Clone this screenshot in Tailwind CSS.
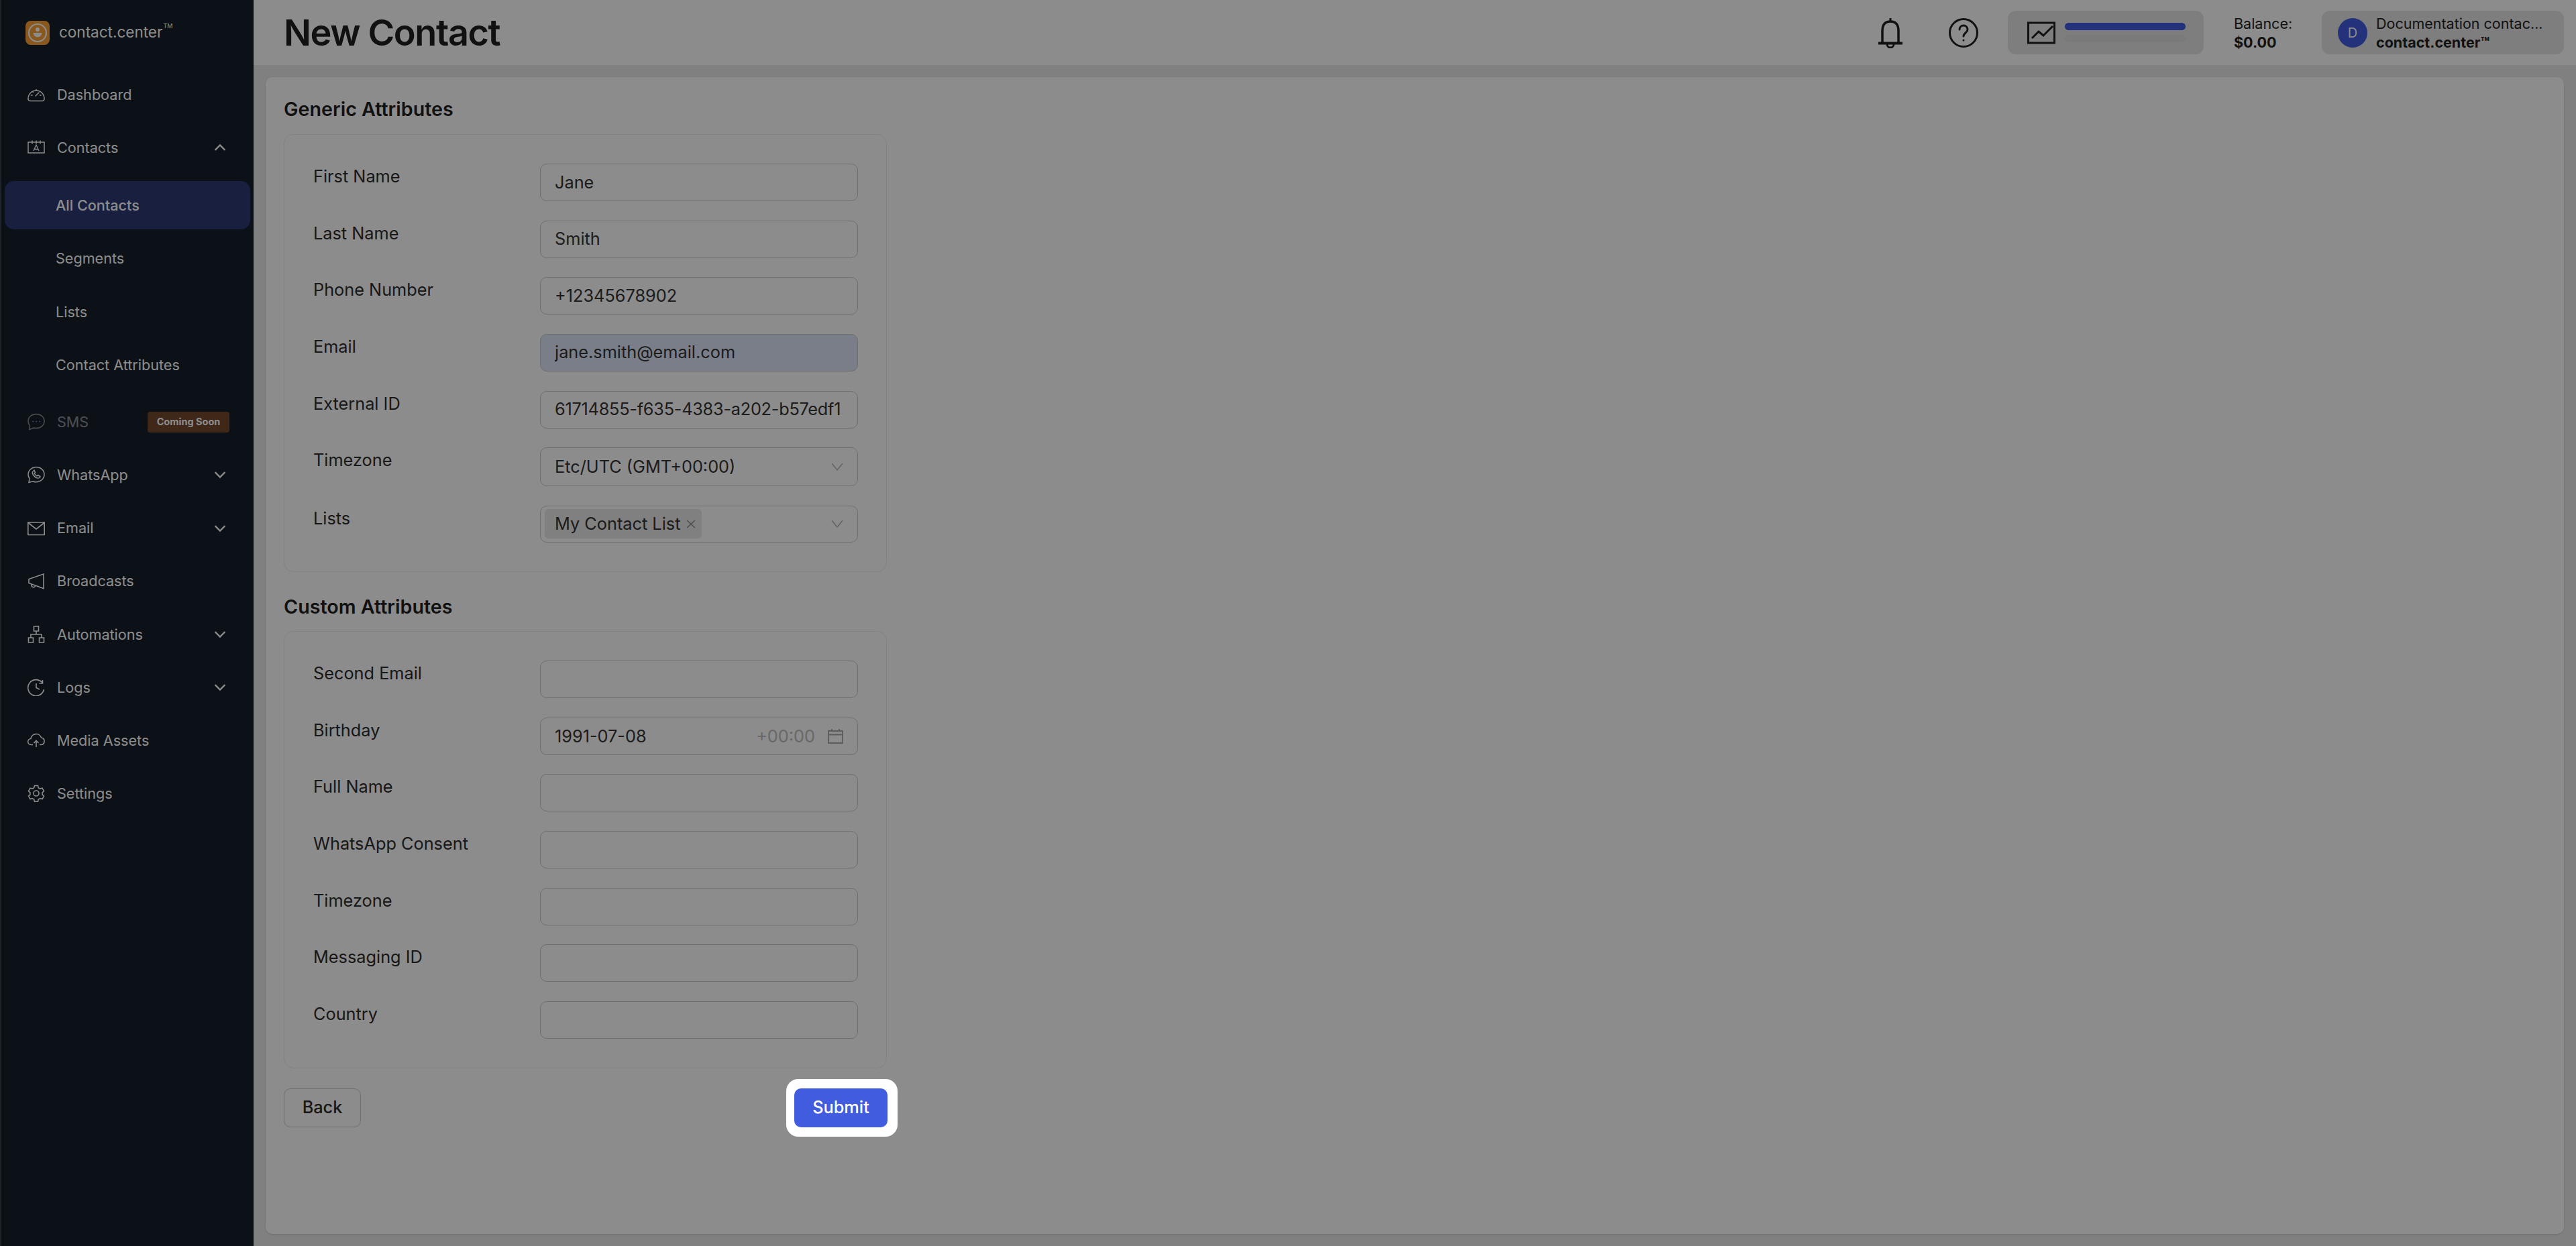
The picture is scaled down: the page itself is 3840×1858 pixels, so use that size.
<!DOCTYPE html>
<html lang="en">
<head>
<meta charset="utf-8">
<title>New Contact</title>
<script src="https://cdn.jsdelivr.net/npm/@tailwindcss/browser@4"></script>
</head>
<body class="h-[1858px] w-[3840px] overflow-hidden bg-[#e9e9e9] font-[Inter,sans-serif]">
<div class="flex h-full">
  <aside class="flex h-full w-[378px] shrink-0 flex-col border-l-2 border-[#3a3f47] bg-[#171f2b] text-[21.6px] text-white">
    <div class="flex h-[105px] shrink-0 items-start pl-[36px] pt-[31px]">
      <svg class="h-[36px] w-[36px] shrink-0" viewBox="0 0 36 36"><rect width="36" height="36" rx="8" fill="#fb9f33"/><circle cx="18" cy="18" r="13" fill="none" stroke="#fff" stroke-width="2.2"/><circle cx="18" cy="13" r="3" fill="#fff"/><path d="M11.5 18h13a6.5 6.5 0 0 1-13 0z" fill="#fff"/></svg>
      <span class="ml-[14px] mt-[2px] text-[22.5px] leading-[30px]">contact.center</span>
      <span class="ml-[1px] mt-[3px] text-[9px] leading-[10px]">TM</span>
    </div>
    <nav class="flex flex-col gap-[7.2px]">
      <a class="flex h-[72px] items-center pl-[39px]"><svg class="h-[26px] w-[26px] shrink-0" viewBox="0 0 26 26" fill="none" stroke="currentColor" stroke-width="1.5"><path d="M4 22.5h18a3 3 0 0 0 3-3.5 12 12 0 1 0-24 0 3 3 0 0 0 3 3.5z"/><path d="M12 15l5-5M13 5.500v1.500M5.500 14H7M20 14h-1.500M7.500 8.500l1 1" stroke-linecap="round"/></svg><span class="ml-[18px]">Dashboard</span></a>
      <a class="flex h-[72px] items-center pl-[39px] pr-[41px]"><svg class="h-[26px] w-[26px] shrink-0" viewBox="0 0 26 26" fill="none" stroke="currentColor" stroke-width="1.5"><path d="M1 5h24v16H1zM7 2.500v5M13 2.500v5M19 2.500v5"/><path d="M9 18l4-9 4 9M10.200 15.500h5.600" stroke-width="1.300"/></svg><span class="ml-[18px] flex-1">Contacts</span><svg class="h-[12px] w-[18px]" viewBox="0 0 18 12" fill="none" stroke="currentColor" stroke-width="2.400"><path d="M1.500 10L9 2.500 16.500 10"/></svg></a>
      <a class="ml-[5px] mr-[5px] mt-[7px] flex h-[72px] items-center rounded-[14px] bg-[#2c3a74] pl-[76px] font-medium">All Contacts</a>
      <a class="flex h-[72px] items-center pl-[81px]">Segments</a>
      <a class="flex h-[72px] items-center pl-[81px]">Lists</a>
      <a class="flex h-[72px] items-center pl-[81px]">Contact Attributes</a>
      <a class="mt-[6px] flex h-[72px] items-center pl-[39px] pr-[36px]"><span class="flex flex-1 items-center opacity-50"><svg class="h-[26px] w-[26px] shrink-0" viewBox="0 0 26 26" fill="none" stroke="currentColor" stroke-width="1.5"><path d="M13 1.500C6 1.500 1 6 1 12c0 3 1 5 2.500 6.500L3 24.500l6-2.500c1.300.4 2.600.5 4 .5 7 0 12-4.500 12-10.500S20 1.500 13 1.500z"/><path d="M8 12.500h.5M13 12.500h.5M18 12.500h.5" stroke-linecap="round"/></svg><span class="ml-[18px]">SMS</span></span><span class="flex h-[31px] w-[122px] items-center justify-center rounded-[4px] bg-[#74492c] text-[14.500px] font-bold">Coming Soon</span></a>
      <a class="flex h-[72px] items-center pl-[39px] pr-[41px]"><svg class="h-[26px] w-[26px] shrink-0" viewBox="0 0 26 26" fill="none" stroke="currentColor" stroke-width="1.5"><path d="M13 1.500C6.500 1.500 1 6.500 1 12.500c0 2.300.8 4.400 2 6l-1 6 6-1.800c1.500.7 3.200 1.100 5 1.100 6.500 0 12-5 12-11.300S19.500 1.500 13 1.500z"/><path d="M8.500 7.500c-1.500 1-1.500 3 0 5.500 2 3 5 5 7.500 5 1.500 0 3-1.200 3-2.500l-3.500-2-1.500 1.300c-1.700-.8-3-2.300-3.800-4l1.300-1.300-1.500-3.200z"/></svg><span class="ml-[18px] flex-1">WhatsApp</span><svg class="h-[12px] w-[18px]" viewBox="0 0 18 12" fill="none" stroke="currentColor" stroke-width="2.400"><path d="M1.500 2L9 9.500 16.500 2"/></svg></a>
      <a class="flex h-[72px] items-center pl-[39px] pr-[41px]"><svg class="h-[26px] w-[26px] shrink-0" viewBox="0 0 26 26" fill="none" stroke="currentColor" stroke-width="1.6"><path d="M.8 4h24.400v18.500H.8zM1 4.500l12 9.500 12-9.500"/></svg><span class="ml-[18px] flex-1">Email</span><svg class="h-[12px] w-[18px]" viewBox="0 0 18 12" fill="none" stroke="currentColor" stroke-width="2.400"><path d="M1.500 2L9 9.500 16.500 2"/></svg></a>
      <a class="flex h-[72px] items-center pl-[39px]"><svg class="h-[26px] w-[26px] shrink-0" viewBox="0 0 26 26" fill="none" stroke="currentColor" stroke-width="1.6"><path d="M24 2L2 9.500v6L24 23.500zM6 17v2.500a2.500 2.500 0 0 0 2.500 2 2.500 2.500 0 0 0 3-1.500"/></svg><span class="ml-[18px]">Broadcasts</span></a>
      <a class="flex h-[72px] items-center pl-[39px] pr-[41px]"><svg class="h-[26px] w-[26px] shrink-0" viewBox="0 0 26 26" fill="none" stroke="currentColor" stroke-width="1.6"><path d="M9.500 1h7v7h-7zM1.500 18h7v7h-7zM17.500 18h7v7h-7zM13 8v5M5 18v-5h16v5"/></svg><span class="ml-[18px] flex-1">Automations</span><svg class="h-[12px] w-[18px]" viewBox="0 0 18 12" fill="none" stroke="currentColor" stroke-width="2.400"><path d="M1.500 2L9 9.500 16.500 2"/></svg></a>
      <a class="flex h-[72px] items-center pl-[39px] pr-[41px]"><svg class="h-[26px] w-[26px] shrink-0" viewBox="0 0 26 26" fill="none" stroke="currentColor" stroke-width="1.6"><path d="M22 6A12 12 0 1 0 24.500 16M22.500 2v5h-5M13 7v6.500l5 2.500"/></svg><span class="ml-[18px] flex-1">Logs</span><svg class="h-[12px] w-[18px]" viewBox="0 0 18 12" fill="none" stroke="currentColor" stroke-width="2.400"><path d="M1.500 2L9 9.500 16.500 2"/></svg></a>
      <a class="flex h-[72px] items-center pl-[39px]"><svg class="h-[26px] w-[26px] shrink-0" viewBox="0 0 26 26" fill="none" stroke="currentColor" stroke-width="1.600"><path d="M8 19.500H5.500a4.500 4.500 0 0 1-.5-9A8 8 0 0 1 20.500 9a5.300 5.300 0 0 1 0 10.500H18M13 23v-9M9.500 17l3.500-3.500 3.500 3.500"/></svg><span class="ml-[18px]">Media Assets</span></a>
      <a class="flex h-[72px] items-center pl-[39px]"><svg class="h-[26px] w-[26px] shrink-0" viewBox="0 0 26 26" fill="none" stroke="currentColor" stroke-width="1.600"><circle cx="13" cy="13" r="4"/><path d="M10.500 1.500h5l.8 3.200 2.500 1.400 3.200-.9 2.500 4.400-2.400 2.300v2.900l2.400 2.300-2.500 4.400-3.200-.9-2.500 1.400-.8 3.200h-5l-.8-3.200-2.500-1.400-3.200.9-2.500-4.400 2.400-2.300v-2.900L1.500 9.600 4 5.200l3.200.9 2.500-1.400z"/></svg><span class="ml-[18px]">Settings</span></a>
    </nav>
  </aside>

  <div class="flex min-w-0 flex-1 flex-col">
    <header class="flex h-[97px] shrink-0 items-center bg-white pl-[45px] pr-[18px] text-[#1f1f1f]">
      <h1 class="flex-1 text-[54px] font-semibold leading-[94px] tracking-[-1.4px] text-[#1f1f1f]">New Contact</h1>
      <svg class="h-[46px] w-[36px]" viewBox="0 0 36 46" fill="none" stroke="currentColor" stroke-width="3.500"><path d="M6 38V20C6 11 10 6 18 6s12 5 12 14v18"/><path d="M0 38.500h36" stroke-width="4"/><path d="M18 1v5M13 40a5 5 0 0 0 10 0" stroke-width="3"/></svg>
      <svg class="ml-[69px] h-[44px] w-[44px]" viewBox="0 0 44 44" fill="none" stroke="currentColor" stroke-width="3"><circle cx="22" cy="22" r="20.500"/><path d="M16 17c0-4 3-6 6-6s6 2 6 6c0 5-6 5-6 10" stroke-linecap="round"/><circle cx="22" cy="33" r="1.500" fill="currentColor" stroke="none"/></svg>
      <div class="ml-[44px] flex h-[65px] w-[292px] items-center rounded-[12px] bg-[#e6e6e6] pl-[29px] pr-[27px]">
        <svg class="h-[34px] w-[42px] shrink-0" viewBox="0 0 42 34" fill="none" stroke="currentColor" stroke-width="3"><path d="M1.500 2h39v30h-39z"/><path d="M7 25l10-10 7 6 14-14"/></svg>
        <div class="ml-[14px] flex flex-1 flex-col gap-[7px]"><div class="h-[11px] rounded-full bg-[#415cde]"></div><div class="h-[11px] rounded-full bg-[#dedede]"></div></div>
      </div>
      <div class="ml-[45px] w-[131px] text-[21.5px] leading-[28px]"><div>Balance:</div><div class="font-bold">$0.00</div></div>
      <div class="flex h-[65px] w-[361px] items-center rounded-[12px] bg-[#e6e6e6] pl-[24px]">
        <div class="flex h-[44px] w-[44px] shrink-0 items-center justify-center rounded-full bg-[#415cde] text-[20px] text-white">D</div>
        <div class="ml-[13px] whitespace-nowrap text-[21.5px] leading-[28px]"><div>Documentation contac...</div><div class="font-bold">contact.center™</div></div>
      </div>
    </header>
    <main class="ml-[18px] mr-[18px] mt-[18px] h-[1725px] rounded-[10px] bg-white pl-[27px] pt-[28px] shadow-sm">
      <form class="w-[900px] text-[#2d2d2d]">
        <h2 class="mb-[17px] h-[40px] text-[28.7px] font-semibold leading-[40px] text-[#1f1f1f]">Generic Attributes</h2>
        <fieldset class="flex w-[899px] flex-col gap-[28.67px] rounded-[14px] border-[1.5px] border-[#ededed] pb-[43px] pl-[43px] pr-[42px] pt-[43px] text-[25.3px]">
          <div class="flex"><label class="w-[338px] pt-[2px] leading-[34px]">First Name</label><input class="h-[56px] flex-1 rounded-[10px] border-[1.5px] border-[#cacaca] bg-white px-[21px] pb-[2px] text-[#333]" value="Jane"></div>
          <div class="flex"><label class="w-[338px] pt-[2px] leading-[34px]">Last Name</label><input class="h-[56px] flex-1 rounded-[10px] border-[1.5px] border-[#cacaca] bg-white px-[21px] pb-[2px] text-[#333]" value="Smith"></div>
          <div class="flex"><label class="w-[338px] pt-[2px] leading-[34px]">Phone Number</label><input class="h-[56px] flex-1 rounded-[10px] border-[1.5px] border-[#cacaca] bg-white px-[21px] pb-[2px] text-[#333]" value="+12345678902"></div>
          <div class="flex"><label class="w-[338px] pt-[2px] leading-[34px]">Email</label><input class="h-[56px] flex-1 rounded-[10px] border-[1.5px] border-[#cacaca] bg-[#dfe6f7] px-[21px] pb-[2px] text-[#333]" value="jane.smith@email.com"></div>
          <div class="flex"><label class="w-[338px] pt-[2px] leading-[34px]">External ID</label><input class="h-[56px] flex-1 rounded-[10px] border-[1.5px] border-[#cacaca] bg-white px-[21px] pb-[2px] tracking-[-0.25px] text-[#333]" value="61714855-f635-4383-a202-b57edf1"></div>
          <div class="flex"><label class="w-[338px] pt-[2px] leading-[34px]">Timezone</label><div class="flex h-[58px] flex-1 items-center justify-between rounded-[10px] border-[1.5px] border-[#cacaca] pl-[21px] pr-[21px] text-[#333]"><span>Etc/UTC (GMT+00:00)</span><svg class="h-[12px] w-[18px]" viewBox="0 0 18 12" fill="none" stroke="#b5b5b5" stroke-width="1.500"><path d="M1 1l8 10 8-10"/></svg></div></div>
          <div class="flex"><label class="w-[338px] pt-[2px] leading-[34px]">Lists</label><div class="flex h-[55px] flex-1 items-center justify-between rounded-[10px] border-[1.5px] border-[#cacaca] pl-[6px] pr-[21px] text-[#333]"><span class="flex h-[44px] w-[234px] items-center justify-between rounded-[6px] bg-[#e9e9e9] pl-[15px] pr-[9px]">My Contact List<svg class="h-[13px] w-[14px]" viewBox="0 0 14 13" fill="none" stroke="#8a8a8a" stroke-width="1.500"><path d="M1 1l12 11M13 1L1 12"/></svg></span><svg class="h-[12px] w-[18px]" viewBox="0 0 18 12" fill="none" stroke="#b5b5b5" stroke-width="1.500"><path d="M1 1l8 10 8-10"/></svg></div></div>
        </fieldset>
        <h2 class="mb-[16px] mt-[32px] h-[40px] text-[28.7px] font-semibold leading-[40px] text-[#1f1f1f]">Custom Attributes</h2>
        <fieldset class="flex w-[899px] flex-col gap-[28.67px] rounded-[14px] border-[1.5px] border-[#ededed] pb-[43px] pl-[43px] pr-[42px] pt-[43px] text-[25.3px]">
          <div class="flex"><label class="w-[338px] pt-[2px] leading-[34px]">Second Email</label><input class="h-[56px] flex-1 rounded-[10px] border-[1.5px] border-[#cacaca] bg-white px-[21px]"></div>
          <div class="flex"><label class="w-[338px] pt-[2px] leading-[34px]">Birthday</label><div class="flex h-[56px] flex-1 items-center rounded-[10px] border-[1.5px] border-[#cacaca] pl-[21px] pr-[21px] text-[#333]"><span class="flex-1">1991-07-08</span><span class="text-[#bdbdbd]">+00:00</span><svg class="ml-[19px] h-[22px] w-[23px]" viewBox="0 0 23 22" fill="none" stroke="#a8a8a8" stroke-width="1.800"><path d="M1 3h21v18H1zM1 8.500h21M6 0v4M17 0v4"/></svg></div></div>
          <div class="flex"><label class="w-[338px] pt-[2px] leading-[34px]">Full Name</label><input class="h-[56px] flex-1 rounded-[10px] border-[1.5px] border-[#cacaca] bg-white px-[21px]"></div>
          <div class="flex"><label class="w-[338px] pt-[2px] leading-[34px]">WhatsApp Consent</label><input class="h-[56px] flex-1 rounded-[10px] border-[1.5px] border-[#cacaca] bg-white px-[21px]"></div>
          <div class="flex"><label class="w-[338px] pt-[2px] leading-[34px]">Timezone</label><input class="h-[56px] flex-1 rounded-[10px] border-[1.5px] border-[#cacaca] bg-white px-[21px]"></div>
          <div class="flex"><label class="w-[338px] pt-[2px] leading-[34px]">Messaging ID</label><input class="h-[56px] flex-1 rounded-[10px] border-[1.5px] border-[#cacaca] bg-white px-[21px]"></div>
          <div class="flex"><label class="w-[338px] pt-[2px] leading-[34px]">Country</label><input class="h-[56px] flex-1 rounded-[10px] border-[1.5px] border-[#cacaca] bg-white px-[21px]"></div>
        </fieldset>
        <div class="mt-[30px] flex items-center justify-between text-[25.3px]">
          <button type="button" class="h-[58px] w-[115px] rounded-[10px] border-[1.5px] border-[#cacaca] pb-[2px] font-medium text-[#2d2d2d]">Back</button>
          <div class="relative">
            <button type="button" class="h-[58px] w-[139px] rounded-[10px] bg-[#415cde] pb-[2px] font-medium text-white">Submit</button>
            <div class="absolute bottom-[-14px] left-[-12px] right-[-15px] top-[-14px] z-50 rounded-[18px] shadow-[0_0_0_9999px_rgba(0,0,0,0.45)]"></div>
          </div>
        </div>
      </form>
    </main>
  </div>
</div>
</body>
</html>
